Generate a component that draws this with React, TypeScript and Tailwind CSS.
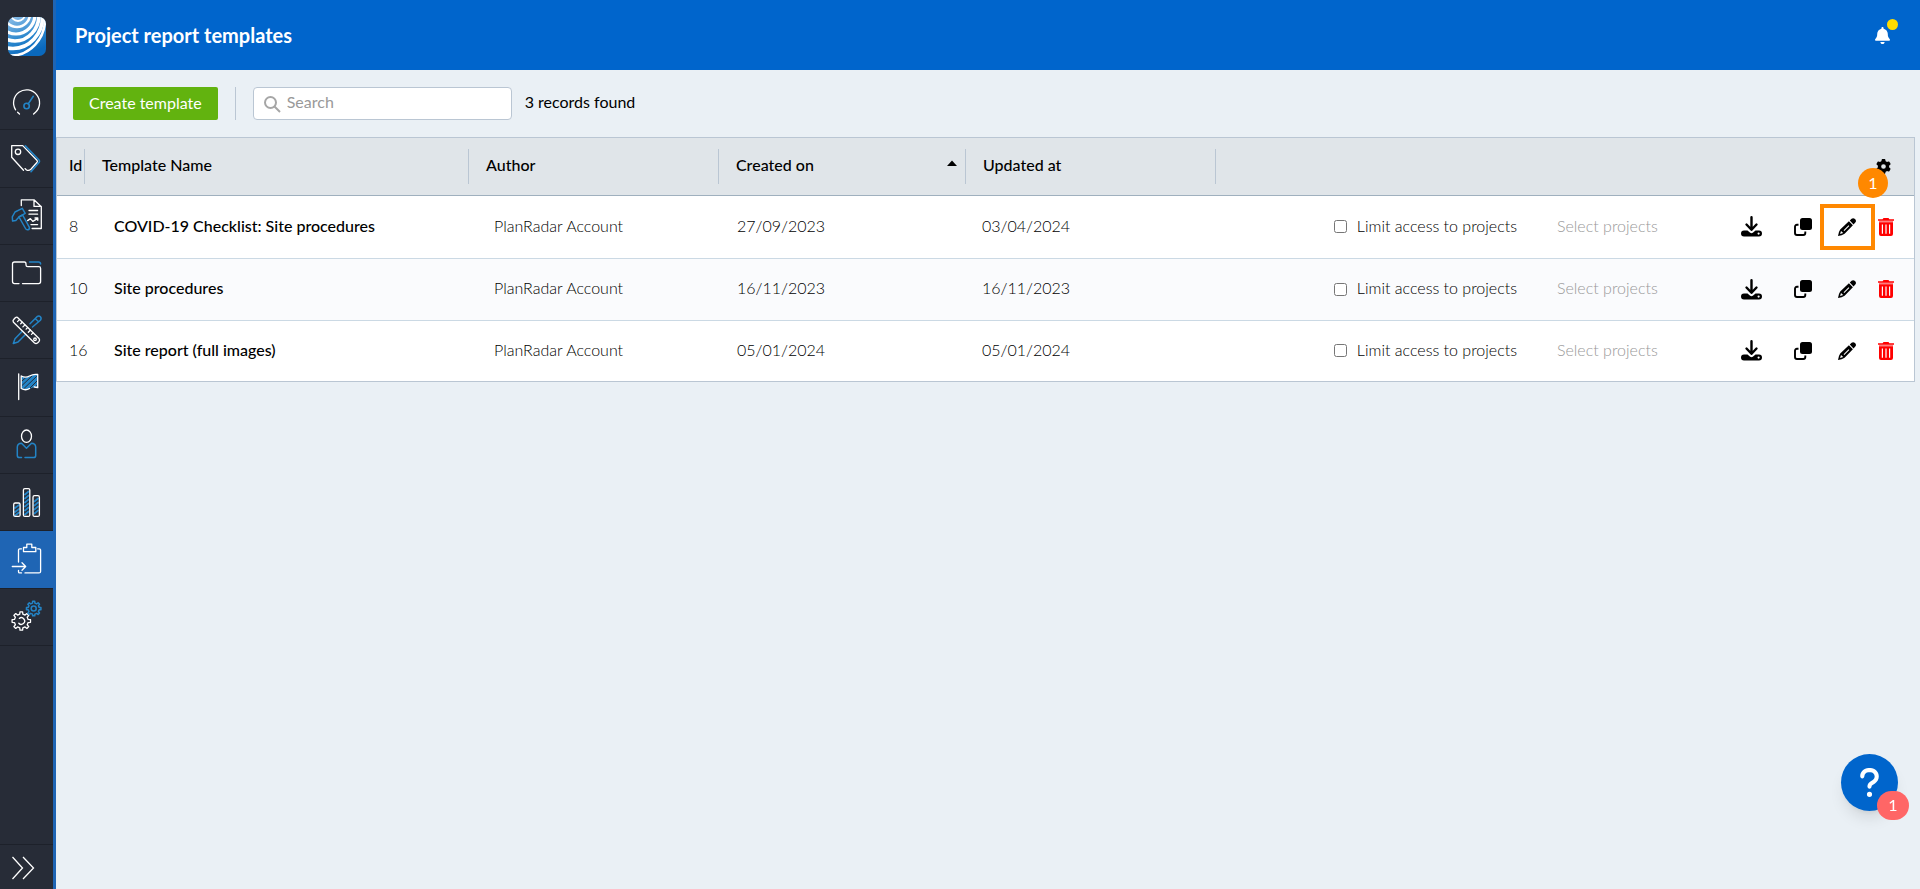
import { useState } from 'react';
import type { ReactNode } from 'react';
import { FaBell, FaGear, FaQuestion } from 'react-icons/fa6';

interface Template {
  id: number;
  name: string;
  author: string;
  createdOn: string;
  updatedAt: string;
}

const TEMPLATES: Template[] = [
  { id: 8, name: 'COVID-19 Checklist: Site procedures', author: 'PlanRadar Account', createdOn: '27/09/2023', updatedAt: '03/04/2024' },
  { id: 10, name: 'Site procedures', author: 'PlanRadar Account', createdOn: '16/11/2023', updatedAt: '16/11/2023' },
  { id: 16, name: 'Site report (full images)', author: 'PlanRadar Account', createdOn: '05/01/2024', updatedAt: '05/01/2024' },
];

const BLUE = '#2384c6';

// Outline of a cog with flat teeth around a centre point
const gearPath = (cx: number, cy: number, outer: number, inner: number, teeth: number) => {
  const step = (Math.PI * 2) / teeth;
  const points: string[] = [];
  for (let i = 0; i < teeth; i++) {
    const a = i * step - Math.PI / 2;
    [[-0.28, inner], [-0.18, outer], [0.18, outer], [0.28, inner]].forEach(([offset, r]) => {
      const angle = a + offset * step;
      points.push(`${(cx + Math.cos(angle) * r).toFixed(2)},${(cy + Math.sin(angle) * r).toFixed(2)}`);
    });
  }
  return `M${points.join('L')}Z`;
};

const NavIcon = ({ children }: { children: ReactNode }) => (
  <svg
    width="33"
    height="33"
    viewBox="0 0 33 33"
    fill="none"
    stroke="#fff"
    strokeWidth="1.3"
    strokeLinecap="round"
    strokeLinejoin="round"
    aria-hidden="true"
  >
    {children}
  </svg>
);

const GaugeIcon = () => (
  <NavIcon>
    <path d="M9.5 29 7.6 27.2M5.6 24.8A13 13 0 1 1 25.5 27.3L23.6 29" />
    <path stroke={BLUE} strokeWidth="1.6" d="M23.3 11.3 18.2 18.9" />
    <circle stroke={BLUE} strokeWidth="1.6" cx="16.6" cy="21" r="2.7" />
  </NavIcon>
);

const TagIcon = () => (
  <NavIcon>
    <path d="M13.500 28.300 1.700 15.300V3.600h11l14.200 14.600q1 1 .2 2l-6.200 7q-2 2-4.400.8l-1.500-1.400" />
    <circle cx="8" cy="9.8" r="2.7" />
    <path stroke={BLUE} strokeWidth="1.6" d="M15.3 3.900 29 18q1 1 .2 2.200L21 29.700" />
  </NavIcon>
);

const DefectIcon = () => (
  <NavIcon>
    <path d="M11.3 6.5V.8H24l7.300 7V29.500h-9.200M24 .8v6.600h7.300M19 11.500h8.600M19 15.200h8.600M21 25.600h6.600" />
    <path d="m17.6 21.600 2.800-2 2.400 2.800 5-3M25 19h2.800v2.300" />
    <path stroke={BLUE} strokeWidth="1.5" d="M2.3 17.8 5 13l7.300-3.600 2.900 4.900-6.200 3.600-3.200 3.600-3.200.6Z" />
    <path stroke={BLUE} strokeWidth="1.5" d="m9 18 3.600-2 6.800 12.300q.4 2-1.500 2.500-1.700.2-2.400-1.300Z" />
  </NavIcon>
);

const FolderIcon = () => (
  <NavIcon>
    <path d="M9 26.6H4.5Q2.5 26.6 2.5 24.6V7Q2.5 5 4.5 5H14.3Q16 5 16 7V8Q16 9.7 17.8 9.7H28.8Q30.6 9.7 30.6 11.5V24.6Q30.6 26.6 28.6 26.6H12.5" />
    <path stroke={BLUE} strokeWidth="1.5" d="M19.5 4.9H28.5Q30.5 4.9 30.6 7" />
  </NavIcon>
);

const ToolsIcon = () => (
  <NavIcon>
    <path stroke={BLUE} strokeWidth="1.5" d="m20 9.7 7-7q2-1.5 3.400 0t0 3.500L22.500 13M12.300 17.300 5 24.800 3.300 29.500 8 28l7.500-7.500M25.500 4.800l3 3" />
    <path d="M7.300 3.300 29 24.500q1.200 1.500 0 3l-1.500 1.500q-1.500 1-3 0L3.500 8.300q-1-1.500 0-2.500l1.800-2q1-.9 2-.5Z" />
    <path d="m9.500 5.600-2 2M12.200 8.200l-1.500 1.500M14.900 10.900l-2 2M17.600 13.600l-1.500 1.500M20.300 16.200l-2 2M23 18.900l-1.500 1.500" />
    <circle cx="25" cy="25.3" r="1.3" />
  </NavIcon>
);

const FlagIcon = () => (
  <NavIcon>
    <path fill={BLUE} stroke="none" d="M11.2 5.300q5 2.200 8.500 0t8-1.500v13q-4-1.500-8 1t-8.500 0Z" />
    <path stroke="#272c37" strokeWidth="1" d="m12 10 5-4.500M12 14.500 22 5M13.500 18 26.500 5.500M19.500 17.500l8-8M24 17l4-3.500" />
    <path d="M8.700 2.800v25.700M11.200 5q4.500 2.200 8.300 0t8.200-1.500v13.200q-2-.8-3.500-.7M11.200 5v12.500q4.500 2.500 8.300 0" />
  </NavIcon>
);

const PersonIcon = () => (
  <NavIcon>
    <ellipse cx="16.5" cy="8.2" rx="5" ry="6.2" />
    <path stroke={BLUE} strokeWidth="1.5" d="M11.5 29.6H9.5Q7.3 29.6 7.3 27.5V19Q7.5 15.5 11.5 15.3L16.5 20.3 21.5 15.3Q25.5 15.5 25.7 19V27.5Q25.7 29.6 23.5 29.6H15" />
  </NavIcon>
);

const ChartIcon = () => (
  <NavIcon>
    <path stroke={BLUE} strokeWidth="1.8" d="m5 22 4-3M5 26l4-3M5 29.500l4-3M15 8.500l3.500-3M15 12.500l3.500-3M15 16.500l3.500-3M15 20.500l3.500-3M15 24.500l3.500-3M15 28.500l3.500-3M24.500 15.500l3.500-3M24.500 19.500l3.500-3M24.500 23.500l3.500-3M24.500 27.500l3.500-3" />
    <rect x="3.7" y="17" width="6.4" height="13.4" rx="1.5" />
    <rect x="13.4" y="2.6" width="6.4" height="27.8" rx="1.5" />
    <rect x="23" y="9.7" width="6.4" height="20.7" rx="1.5" />
  </NavIcon>
);

const ReportIcon = () => (
  <NavIcon>
    <path d="M11.5 5.800H9.700q-1.200 0-1.200 1.200v12M8.500 27.500v1.200q0 1.200 1.200 1.200h1.800M15 29.900h14q1.600 0 1.600-1.500V7.300q0-1.500-1.500-1.500h-1.500" />
    <path d="M13.5 8.700V4.500h3.300V1.200h5v3.300h4v4.200Z" />
    <path d="M2.3 23.500h13.200M12 19.800l3.700 3.700-3.700 3.700" />
  </NavIcon>
);

const SettingsIcon = () => (
  <NavIcon>
    <path d={gearPath(11.3, 21, 9.3, 7, 8)} />
    <path d="M9.300 18.400A3.300 3.300 0 1 1 8.800 23.200" />
    <path stroke={BLUE} strokeWidth="1.5" d={gearPath(23.7, 8.6, 7.3, 5.6, 8)} />
    <circle stroke={BLUE} strokeWidth="1.5" cx="23.7" cy="8.6" r="2.5" />
  </NavIcon>
);

const NAV_ITEMS = [
  { label: 'Dashboard', Icon: GaugeIcon },
  { label: 'Tickets', Icon: TagIcon },
  { label: 'Forms', Icon: DefectIcon },
  { label: 'Projects', Icon: FolderIcon },
  { label: 'Plans', Icon: ToolsIcon },
  { label: 'Milestones', Icon: FlagIcon },
  { label: 'Users', Icon: PersonIcon },
  { label: 'Statistics', Icon: ChartIcon },
  { label: 'Report templates', Icon: ReportIcon, active: true },
  { label: 'Settings', Icon: SettingsIcon },
];

const Logo = () => (
  <svg width="38" height="39" viewBox="0 0 38 39" aria-hidden="true">
    <defs>
      <linearGradient id="logo-fill" x1="0" y1="0" x2="0.4" y2="1">
        <stop offset="0" stopColor="#8fbfe8" />
        <stop offset="0.6" stopColor="#2a86cd" />
        <stop offset="1" stopColor="#0a69bd" />
      </linearGradient>
      <clipPath id="logo-clip">
        <rect width="38" height="39" rx="7" />
      </clipPath>
    </defs>
    <g clipPath="url(#logo-clip)">
      <rect width="38" height="39" fill="url(#logo-fill)" />
      <g fill="none" stroke="#fff">
        <ellipse cx="10" cy="-3" rx="7" ry="7" strokeWidth="1.8" />
        <ellipse cx="9" cy="-3" rx="13" ry="13" strokeWidth="2.6" />
        <ellipse cx="8" cy="-3" rx="19" ry="20" strokeWidth="3.2" />
        <ellipse cx="7" cy="-2" rx="24" ry="26" strokeWidth="3.6" />
        <ellipse cx="5" cy="0" rx="29.500" ry="31.500" strokeWidth="3.6" />
        <ellipse cx="3" cy="2" rx="34" ry="36.500" strokeWidth="2.6" />
      </g>
    </g>
  </svg>
);

const DownloadIcon = () => (
  <svg width="21" height="21" viewBox="0 0 21 21" aria-hidden="true">
    <path d="M10.5 1.200v12M5.500 8.500l5 5.300 5-5.300" fill="none" stroke="#000" strokeWidth="2.4" strokeLinecap="round" strokeLinejoin="round" />
    <path fillRule="evenodd" d="M3 14.500h3.500l2.700 2.300q1.300.9 2.600 0l2.700-2.300H18q3 .2 3 3t-3 3H3q-3-.2-3-3t3-3Zm14.600 2a1.100 1.100 0 1 0 0 2.200 1.100 1.100 0 0 0 0-2.200Z" />
  </svg>
);

const CopyIcon = () => (
  <svg width="18" height="18" viewBox="0 0 18 18" aria-hidden="true">
    <rect x="6" width="12" height="12" rx="2.5" />
    <path d="M4.500 6.800H3Q1 6.800 1 8.800V15q0 2 2 2h6.300q2 0 2-2v-1.500" fill="none" stroke="#000" strokeWidth="1.9" />
  </svg>
);

const PencilIcon = () => (
  <svg width="18" height="18" viewBox="0 0 18 18" aria-hidden="true">
    <path d="m11.800 2.500 1.800-1.700q1.600-1.400 3.400.3t.3 3.500l-1.800 1.800Z" />
    <path fillRule="evenodd" d="m10.900 3.300 4 4L6.600 15.700Q4 17.500 0 18q.4-4 2.200-6.600ZM3 12.900l-.9 3 3.100-1Zm7.600-5.700-5 5 .7.700 5-5Z" />
  </svg>
);

const TrashIcon = () => (
  <svg width="16" height="18" viewBox="0 0 16 18" fill="#f00" aria-hidden="true">
    <path d="M0 1.200h4.600L5.500 0h5l.9 1.200H16v1.500H0Z" />
    <path fillOpacity="0.5" d="M1 2.700h14v1.500H1Z" />
    <path fillRule="evenodd" d="M1 4.200h14V16q0 2-2 2H3q-2 0-2-2Zm2.800 2.300v9.300h1.200V6.500Zm3.600 0v9.300h1.200V6.500Zm3.600 0v9.300h1.200V6.500Z" />
  </svg>
);

interface HeaderCellProps {
  children: ReactNode;
  inset?: string;
  sorted?: boolean;
}

const HeaderCell = ({ children, inset = 'pl-[17px]', sorted }: HeaderCellProps) => (
  <th scope="col" className="p-0 text-left font-medium">
    <div className={`flex h-[35px] items-center justify-between border-r border-[#bac6d3] pb-0.5 ${inset}`}>
      <span className="whitespace-nowrap">{children}</span>
      {sorted && (
        <svg className="mr-2 mb-1" width="10" height="6" viewBox="0 0 10 6" aria-hidden="true">
          <path d="M5 0.5 10 6H0Z" />
        </svg>
      )}
    </div>
  </th>
);

const Sidebar = () => (
  <aside className="flex w-14 shrink-0 flex-col border-r-3 border-[#1f65b4] bg-[#272c37]">
    <a href="#home" aria-label="Home" className="flex h-[73px] items-center justify-center">
      <Logo />
    </a>
    <nav className="flex h-[573px] flex-col">
      {NAV_ITEMS.map(({ label, Icon, active }) => (
        <a
          key={label}
          href="#nav"
          aria-label={label}
          className={`flex flex-1 items-center justify-center border-b border-[#1d212a] ${active ? 'bg-[#1f65b4]' : ''}`}
        >
          <Icon />
        </a>
      ))}
    </nav>
    <button type="button" aria-label="Expand menu" className="mt-auto flex h-[45px] items-center border-t border-[#1d212a] pt-0.5 pl-3">
      <svg width="23" height="24" viewBox="0 0 23 24" fill="none" stroke="#fff" strokeWidth="1.3" aria-hidden="true">
        <path d="M.5 1 10.500 12 .5 23M11 1l10.500 11L11 23" />
      </svg>
    </button>
  </aside>
);

const App = () => {
  const [searchQuery, setSearchQuery] = useState('');
  const [limited, setLimited] = useState<number[]>([]);

  const templates = TEMPLATES.filter(tpl => tpl.name.toLowerCase().includes(searchQuery.toLowerCase()));

  const toggleLimit = (id: number) => {
    setLimited(prev => (prev.includes(id) ? prev.filter(x => x !== id) : [...prev, id]));
  };

  return (
    <div className="flex min-h-screen bg-[#eaf0f5] font-['Lato',sans-serif] text-[16px] leading-5 text-black">
      <Sidebar />

      <div className="min-w-0 flex-1">
        <header className="flex h-[70px] items-center justify-between bg-[#0065cc] pr-[30px] pl-[19px] text-white">
          <h1 className="text-[20px] leading-6 font-bold">Project report templates</h1>
          <button type="button" aria-label="Notifications" className="relative">
            <FaBell className="h-[17px] w-[15px]" />
            <span className="absolute -top-2 -right-2 h-[11px] w-[11px] rounded-full bg-[#ffdc00]" />
          </button>
        </header>

        <main>
          {/* Toolbar */}
          <div className="flex h-[67px] items-center pl-[17px]">
            <button type="button" className="h-[33px] rounded-xs bg-[#62b30f] px-4 pb-0.5 text-white">
              Create template
            </button>
            <div className="mx-[17px] h-[33px] w-px bg-[#bac6d3]" />
            <div className="relative">
              <svg className="absolute top-[9px] left-[11px]" width="17" height="17" viewBox="0 0 17 17" fill="none" stroke="#a6a6a6" strokeWidth="2" aria-hidden="true">
                <circle cx="6.5" cy="6.5" r="5.5" />
                <path d="m10.500 10.500 5.500 5.500" />
              </svg>
              <input
                type="text"
                aria-label="Search"
                placeholder="Search"
                value={searchQuery}
                onChange={(e) => setSearchQuery(e.target.value)}
                className="block h-[33px] w-[259px] rounded-sm border border-[#bac6d3] bg-white pb-1 pl-[33px] placeholder-[#999] focus:outline-none"
              />
            </div>
            <p className="ml-[13px] pb-1">{templates.length} records found</p>
          </div>

          {/* Templates Table */}
          <div className="mr-[5px] border border-[#bac6d3]">
            <table className="w-full table-fixed">
              <colgroup>
                <col className="w-7" />
                <col className="w-[384px]" />
                <col className="w-[250px]" />
                <col className="w-[247px]" />
                <col className="w-[250px]" />
                <col />
              </colgroup>
              <thead>
                <tr className="h-[57px] border-b border-[#9fb0be] bg-[#e0e5e9]">
                  <HeaderCell inset="pl-3">Id</HeaderCell>
                  <HeaderCell>Template Name</HeaderCell>
                  <HeaderCell>Author</HeaderCell>
                  <HeaderCell sorted>Created on</HeaderCell>
                  <HeaderCell>Updated at</HeaderCell>
                  <th className="p-0 pr-[23px]">
                    <div className="flex justify-end">
                      <button type="button" aria-label="Table settings">
                        <FaGear className="block h-[15px] w-[15px]" />
                      </button>
                    </div>
                  </th>
                </tr>
              </thead>
              <tbody>
                {templates.map((tpl, index) => (
                  <tr key={tpl.id} className="h-[62px] border-b border-[#cbd9e4] bg-white first:h-[63px] last:h-[61px] last:border-b-0 even:bg-[#fafbfd]">
                    <td className="p-0 pb-0.5 pl-3 font-light">{tpl.id}</td>
                    <td className="p-0 pb-0.5 pl-[29px] font-medium">{tpl.name}</td>
                    <td className="p-0 pb-0.5 pl-[25px] font-light">{tpl.author}</td>
                    <td className="p-0 pb-0.5 pl-[18px] font-light">{tpl.createdOn}</td>
                    <td className="p-0 pb-0.5 pl-4 font-light">{tpl.updatedAt}</td>
                    <td className="p-0 pr-5">
                      <div className="flex items-center justify-end">
                        <label className="flex items-center gap-[10px] whitespace-nowrap">
                          <input
                            type="checkbox"
                            checked={limited.includes(tpl.id)}
                            onChange={() => toggleLimit(tpl.id)}
                            className="h-[13px] w-[13px]"
                          />
                          <span className="pb-0.5 font-light">Limit access to projects</span>
                        </label>
                        <input
                          type="text"
                          aria-label={`Select projects for ${tpl.name}`}
                          placeholder="Select projects"
                          disabled={!limited.includes(tpl.id)}
                          className="mr-[52px] ml-2 w-[164px] pb-0.5 pl-8 font-light placeholder-[#999]"
                        />
                        <button type="button" aria-label="Download" className="mr-8">
                          <DownloadIcon />
                        </button>
                        <button type="button" aria-label="Duplicate" className="mr-[26px]">
                          <CopyIcon />
                        </button>
                        <button type="button" aria-label="Edit" className="relative mr-[22px]">
                          <PencilIcon />
                          {index === 0 && (
                            <>
                              <span className="absolute -top-[14px] -left-[18px] h-[46px] w-[55px] border-4 border-[#ff8800]" />
                              <span className="absolute -top-[50px] left-5 flex h-[30px] w-[30px] items-center justify-center rounded-full bg-[#ff8800] text-white">
                                1
                              </span>
                            </>
                          )}
                        </button>
                        <button type="button" aria-label="Delete">
                          <TrashIcon />
                        </button>
                      </div>
                    </td>
                  </tr>
                ))}
              </tbody>
            </table>
          </div>
        </main>
      </div>

      <button
        type="button"
        aria-label="Help"
        className="fixed right-[22px] bottom-[78px] flex h-[57px] w-[57px] items-center justify-center rounded-full bg-[#0065cc] text-white shadow-lg"
      >
        <FaQuestion className="h-[33px] w-[33px]" />
        <span className="absolute -right-[11px] -bottom-[9px] flex h-[29px] w-8 items-center justify-center rounded-full bg-[#ff6666] pb-px">1</span>
      </button>
    </div>
  );
};

export default App;
